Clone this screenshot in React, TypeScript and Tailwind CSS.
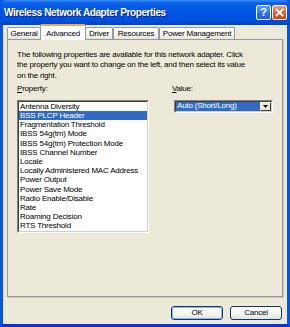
const font = "font-['Liberation_Sans',Arial,sans-serif]";

const tabs = ["General", "Advanced", "Driver", "Resources", "Power Management"];
const tabWidths = ["w-[34px]", "w-[46px]", "w-[28px]", "w-[46px]", "w-[76px]"];

const properties = [
  "Antenna Diversity",
  "BSS PLCP Header",
  "Fragmentation Threshold",
  "IBSS 54g(tm) Mode",
  "IBSS 54g(tm) Protection Mode",
  "IBSS Channel Number",
  "Locale",
  "Locally Administered MAC Address",
  "Power Output",
  "Power Save Mode",
  "Radio Enable/Disable",
  "Rate",
  "Roaming Decision",
  "RTS Threshold",
];

function TitleBar() {
  return (
    <div className="flex h-[25px] items-center rounded-t-[6px] bg-[linear-gradient(to_bottom,#3b8cf5_0%,#0a5fe8_12%,#0055e5_45%,#0050de_80%,#0044c8_100%)] pl-[4px] pr-[3px]">
      <span className="flex-1 text-[10px] font-bold tracking-[-0.4px] text-white [text-shadow:1px_1px_0_#0a1e7a]">
        Wireless Network Adapter Properties
      </span>
      <div className="flex gap-[1px] pb-[1px]">
        <div className="flex h-[15px] w-[15px] items-center justify-center rounded-[2px] border border-white bg-[linear-gradient(to_bottom,#5b9bff,#2a6df0_60%,#1d5ee0)] text-[11px] font-bold leading-none text-white">
          ?
        </div>
        <div className="flex h-[15px] w-[15px] items-center justify-center rounded-[2px] border border-white bg-[linear-gradient(to_bottom,#f29a7c,#e3582d_60%,#cc4418)]">
          <svg width="9" height="9" viewBox="0 0 9 9">
            <path d="M1.5 1.5 L7.5 7.5 M7.5 1.5 L1.5 7.5" stroke="white" strokeWidth="1.8" strokeLinecap="square" />
          </svg>
        </div>
      </div>
    </div>
  );
}

function Tabs() {
  return (
    <div className="flex h-[14px] items-end">
      {tabs.map((t, i) =>
        t === "Advanced" ? (
          <div
            key={t}
            className={`${tabWidths[i]} relative z-10 -mb-[1px] -mx-[1px] flex h-[16px] items-center justify-center rounded-t-[2px] border-x border-t-[2px] border-x-[#919b9c] border-t-[#f0a93a] bg-[#fcfcfe] pt-[1px] text-[8px] tracking-[-0.2px] text-black`}
          >
            {t}
          </div>
        ) : (
          <div
            key={t}
            className={`${tabWidths[i]} flex h-[12px] items-center justify-center rounded-t-[2px] border-x border-t border-[#919b9c] bg-[linear-gradient(to_bottom,#ffffff,#f3f2ec_70%,#e6e4da)] text-[8px] tracking-[-0.2px] text-black`}
          >
            {t}
          </div>
        )
      )}
    </div>
  );
}

function PropertyList() {
  return (
    <div className="h-[133px] w-[132px] border border-b-white border-l-[#808080] border-r-white border-t-[#808080]">
      <div className="h-full border border-b-[#d4d0c8] border-l-[#404040] border-r-[#d4d0c8] border-t-[#404040] bg-white">
        {properties.map((p) => (
          <div
            key={p}
            className={`h-[9.2px] pl-[1px] text-[8px] leading-[9.2px] tracking-[-0.2px] whitespace-nowrap ${
              p === "BSS PLCP Header" ? "bg-[#316ac5] text-white" : "text-black"
            }`}
          >
            {p}
          </div>
        ))}
      </div>
    </div>
  );
}

function ValueCombo() {
  return (
    <div className="ml-[2px] flex h-[13px] w-[99px] border border-b-white border-l-[#808080] border-r-white border-t-[#808080]">
      <div className="flex flex-1 items-center border border-b-[#d4d0c8] border-l-[#404040] border-r-[#d4d0c8] border-t-[#404040] bg-white">
        <span className="flex h-full flex-1 items-center bg-[#316ac5] pl-[1px] text-[8px] tracking-[-0.2px] text-white">
          Auto (Short/Long)
        </span>
        <span className="flex h-full w-[11px] items-center justify-center border border-b-[#404040] border-l-white border-r-[#404040] border-t-white bg-[#ece9d8]">
          <svg width="5" height="3" viewBox="0 0 5 3">
            <path d="M0 0 H5 L2.5 3 Z" fill="black" />
          </svg>
        </span>
      </div>
    </div>
  );
}

function XpButton({ label, primary }: { label: string; primary?: boolean }) {
  return (
    <div className="h-[14px] w-[52px] rounded-[3px] border border-[#003c74] bg-[linear-gradient(to_bottom,#ffffff,#f4f4f0_60%,#e3e2da)]">
      <div
        className={`flex h-full items-center justify-center rounded-[2px] text-[8px] tracking-[-0.2px] text-black ${
          primary ? "border border-[#8cb4f2]" : ""
        }`}
      >
        {label}
      </div>
    </div>
  );
}

export default function App() {
  return (
    <div className={`${font} h-[327px] w-[290px] overflow-hidden bg-[#0055e5]`}>
      <TitleBar />
      <div className="flex h-[302px] flex-col border-x-[3px] border-b-[3px] border-x-[#0a52e0] border-b-[#0831d9] bg-[#ece9d8]">
        <div className="flex-1 px-[4px]">
          <Tabs />
          <div className="h-[258px] border border-[#919b9c] bg-[#ece9d8] pl-[9px] pr-[9px] pt-[10px] shadow-[1px_1px_0_#c8c6b8]">
            <p className="w-[236px] text-[8px] leading-[10.3px] tracking-[-0.2px] text-black">
              The following properties are available for this network adapter. Click the property you want to change on the left, and then select its value on the right.
            </p>
            <div className="mt-[3px] flex gap-[23px]">
              <div>
                <div className="h-[10px] text-[8px] leading-[10px] tracking-[-0.2px]">
                  <span className="underline">P</span>roperty:
                </div>
                <div className="mt-[6px]">
                  <PropertyList />
                </div>
              </div>
              <div>
                <div className="h-[10px] text-[8px] leading-[10px] tracking-[-0.2px]">
                  <span className="underline">V</span>alue:
                </div>
                <div className="mt-[6px]">
                  <ValueCombo />
                </div>
              </div>
            </div>
          </div>
          <div className="mt-[9px] flex justify-end gap-[7px] pr-[1px]">
            <XpButton label="OK" primary />
            <XpButton label="Cancel" />
          </div>
        </div>
      </div>
    </div>
  );
}
